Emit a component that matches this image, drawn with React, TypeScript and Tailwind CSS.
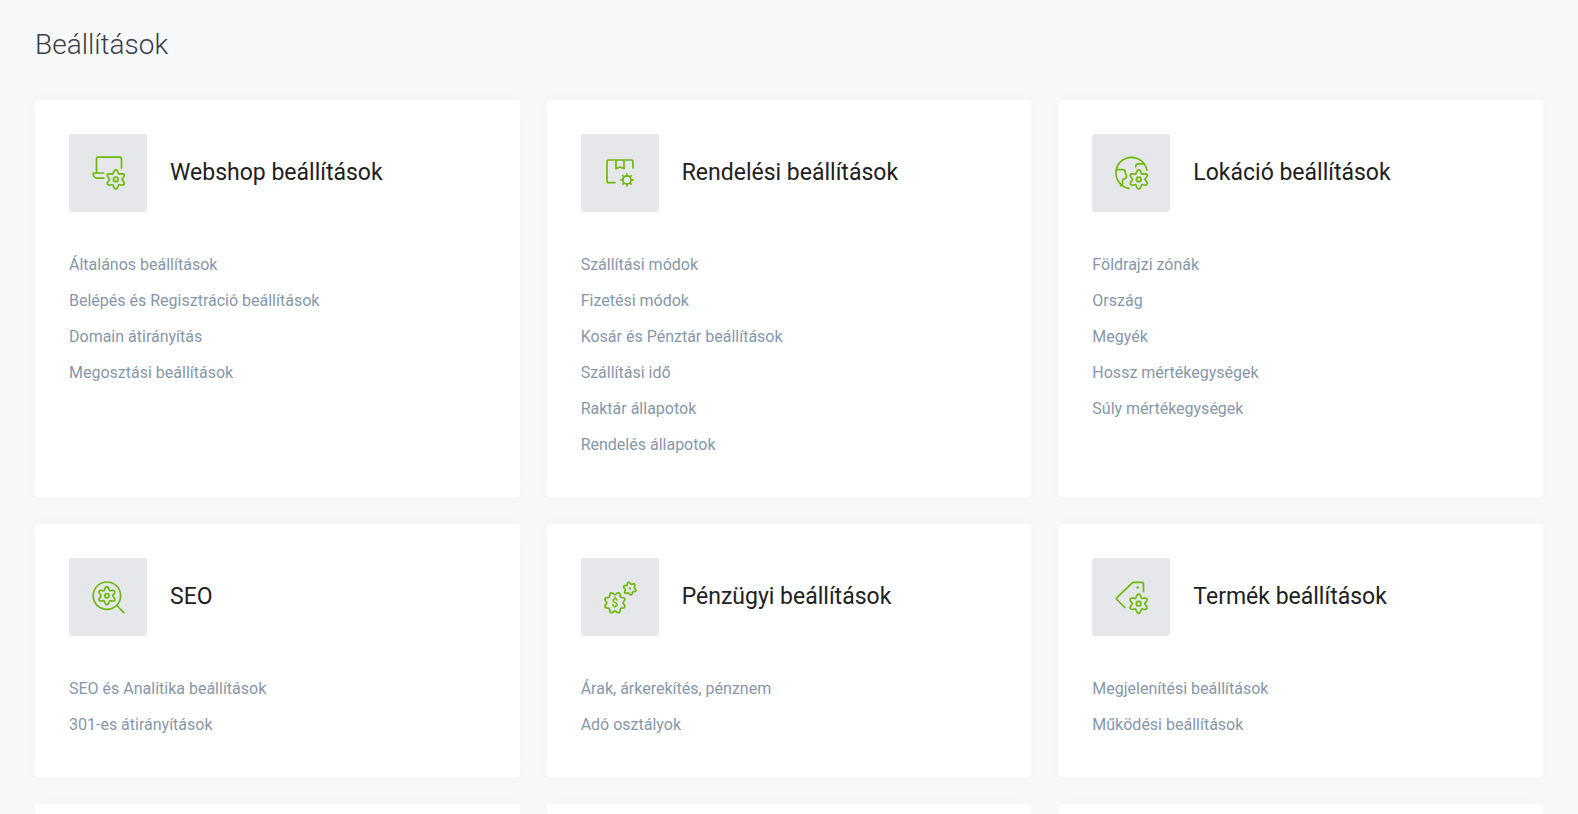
import type { ReactNode } from "react";

function gearPath(cx: number, cy: number, mean: number, amp: number, teeth: number, phase = 0) {
  const steps = teeth * 16;
  const points: string[] = [];
  for (let i = 0; i < steps; i++) {
    const a = (i / steps) * Math.PI * 2;
    const r = mean + amp * Math.cos(teeth * a);
    const t = a + phase - Math.PI / 2;
    points.push(`${(cx + r * Math.cos(t)).toFixed(2)} ${(cy + r * Math.sin(t)).toFixed(2)}`);
  }
  return `M${points.join("L")}Z`;
}

function Drawing({ children }: { children: ReactNode }) {
  return (
    <svg
      viewBox="0 0 78 78"
      className="size-full"
      fill="none"
      stroke="currentColor"
      strokeWidth="1.7"
      strokeLinecap="round"
      strokeLinejoin="round"
      aria-hidden="true"
    >
      {children}
    </svg>
  );
}

function Gear({ cx, cy }: { cx: number; cy: number }) {
  return (
    <>
      <path d={gearPath(cx, cy, 7.9, 1.7, 6)} />
      <circle cx={cx} cy={cy} r="2.3" />
    </>
  );
}

const laptopIcon = (
  <Drawing>
    <path d="M27.5 38.5V25a1.8 1.8 0 0 1 1.8-1.8H50.7a1.8 1.8 0 0 1 1.8 1.8V34" />
    <path d="M34.8 39H24.2v.7a4.5 4.5 0 0 0 4.5 4.5H34.8" />
    <Gear cx={46.8} cy={45.4} />
  </Drawing>
);

const spokes = [0, 45, 90, 135, 180, 225, 270, 315];

const packageIcon = (
  <Drawing>
    <path d="M52 33.8V27.6a1.6 1.6 0 0 0-1.6-1.6H27.8a1.8 1.8 0 0 0-1.8 1.8V46.9a1.8 1.8 0 0 0 1.8 1.8H34" />
    <path d="M35 26.3V34.7l4-1.7 4 1.7V26.3" />
    <circle cx="46" cy="45.9" r="4.1" />
    {spokes.map((deg) => (
      <path key={deg} d="M46 41.5V39.9" transform={`rotate(${deg} 46 45.9)`} />
    ))}
  </Drawing>
);

const globeIcon = (
  <Drawing>
    <path d="M54.9 36.2A15.6 15.6 0 1 0 37 54.3" />
    <path d="M24.6 35.7H31a2.2 2.2 0 0 1 2.2 2.2v1c0 1.2 1.4 1.5 1.4 3 0 1.8-1 2.7-2.3 2.9-1.2.2-1.7.6-1.7 1.8v3c0 1.500-1 1.700-2 2.200" />
    <path d="M43.7 32.8c0-2 1.2-3 2.8-3H51.2" />
    <Gear cx={46.8} cy={45.4} />
  </Drawing>
);

const searchIcon = (
  <Drawing>
    <circle cx="37.9" cy="37.7" r="13.7" />
    <path d="M47.9 47.7 54.9 54.7" />
    <path d={gearPath(37.9, 37.7, 7.4, 1.6, 6)} />
    <circle cx="37.9" cy="37.7" r="2.1" />
  </Drawing>
);

const moneyIcon = (
  <Drawing>
    <path d={gearPath(33.9, 44.8, 9.4, 1.3, 8, Math.PI / 8)} />
    <text
      x="33.9"
      y="49.2"
      textAnchor="middle"
      fontSize="12"
      fontWeight="500"
      fill="currentColor"
      stroke="none"
    >
      $
    </text>
    <path d={gearPath(48.8, 30.6, 5.5, 1, 6, -0.2)} />
    <circle cx="48.8" cy="30.6" r=".4" />
  </Drawing>
);

const tagIcon = (
  <Drawing>
    <path d="M51.500 33.500V25.900a1.500 1.500 0 0 0-1.500-1.500H41.800a3 3 0 0 0-2.100.9L24.900 39.700a1.200 1.200 0 0 0 0 1.800L32.900 49.500" />
    <circle cx="45.7" cy="29.5" r=".5" />
    <Gear cx={46.6} cy={45.7} />
  </Drawing>
);

const sections: { title: string; icon: ReactNode; links: string[] }[] = [
  {
    title: "Webshop beállítások",
    icon: laptopIcon,
    links: [
      "Általános beállítások",
      "Belépés és Regisztráció beállítások",
      "Domain átirányítás",
      "Megosztási beállítások",
    ],
  },
  {
    title: "Rendelési beállítások",
    icon: packageIcon,
    links: [
      "Szállítási módok",
      "Fizetési módok",
      "Kosár és Pénztár beállítások",
      "Szállítási idő",
      "Raktár állapotok",
      "Rendelés állapotok",
    ],
  },
  {
    title: "Lokáció beállítások",
    icon: globeIcon,
    links: ["Földrajzi zónák", "Ország", "Megyék", "Hossz mértékegységek", "Súly mértékegységek"],
  },
  {
    title: "SEO",
    icon: searchIcon,
    links: ["SEO és Analitika beállítások", "301-es átirányítások"],
  },
  {
    title: "Pénzügyi beállítások",
    icon: moneyIcon,
    links: ["Árak, árkerekítés, pénznem", "Adó osztályok"],
  },
  {
    title: "Termék beállítások",
    icon: tagIcon,
    links: ["Megjelenítési beállítások", "Működési beállítások"],
  },
];

const shadow = "shadow-[0_0_20px_rgba(0,0,0,0.02)]";

export default function App() {
  return (
    <main className="min-h-screen bg-[#f6f8fa] px-[35px] pt-[25px] font-['Roboto',sans-serif]">
      <h1 className="mb-[35px] text-[28px] leading-10 font-light text-[#3b3d47]">Beállítások</h1>
      <div className="grid grid-cols-1 gap-[27px] md:grid-cols-2 lg:grid-cols-3">
        {sections.map((section) => (
          <section key={section.title} className={`rounded-[3px] bg-white p-[34px] ${shadow}`}>
            <div className="flex items-center gap-[23px]">
              <div className="size-[78px] shrink-0 rounded-[3px] bg-[#e5e7eb] text-[#6fb90a]">
                {section.icon}
              </div>
              <h2 className="text-[23px] leading-8 font-[450] text-[#212121]">{section.title}</h2>
            </div>
            <ul className="mt-[35px]">
              {section.links.map((link) => (
                <li key={link} className="leading-9">
                  <a href="#" className="text-base leading-9 text-[#8797aa] hover:text-[#6fb90a]">
                    {link}
                  </a>
                </li>
              ))}
            </ul>
          </section>
        ))}
        <div className={`h-2.5 rounded-t-[3px] bg-white ${shadow}`} />
        <div className={`h-2.5 rounded-t-[3px] bg-white ${shadow}`} />
        <div className={`h-2.5 rounded-t-[3px] bg-white ${shadow}`} />
      </div>
    </main>
  );
}
